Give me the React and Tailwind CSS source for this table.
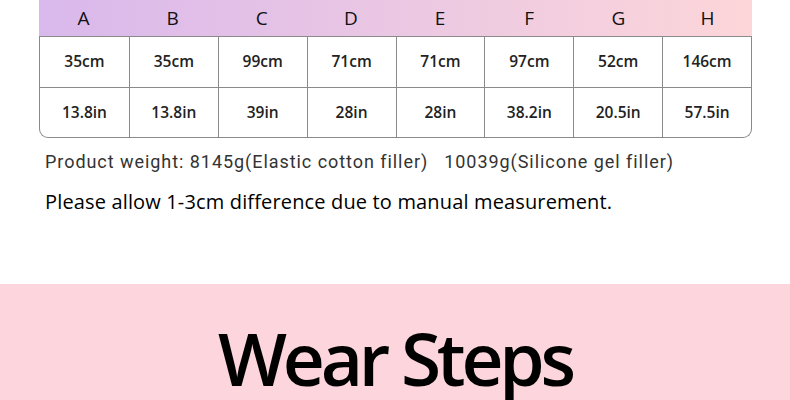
import React from 'react';

const cols = ['A', 'B', 'C', 'D', 'E', 'F', 'G', 'H'];
const cm = ['35cm', '35cm', '99cm', '71cm', '71cm', '97cm', '52cm', '146cm'];
const inch = ['13.8in', '13.8in', '39in', '28in', '28in', '38.2in', '20.5in', '57.5in'];

export default function App() {
  return (
    <div className="w-[790px] h-[400px] overflow-hidden bg-white" style={{ fontFamily: '"Open Sans", "Noto Sans", sans-serif' }}>
      <div className="ml-[39px] w-[713px]">
        <div className="grid grid-cols-8 h-[36px] bg-gradient-to-r from-[#d9b8ec] to-[#fdd6d9]">
          {cols.map((c) => (
            <div key={c} className="flex items-center justify-center text-[19px] text-[#111]">
              {c}
            </div>
          ))}
        </div>
        <div className="border border-t-0 border-[#8a8a8a] rounded-b-[9px] overflow-hidden">
          <div className="grid grid-cols-8 h-[51px] border-t border-[#8a8a8a]">
            {cm.map((v, i) => (
              <div key={i} className={`flex items-center justify-center text-[15.5px] font-semibold text-[#222] ${i > 0 ? 'border-l border-[#8a8a8a]' : ''}`}>
                {v}
              </div>
            ))}
          </div>
          <div className="grid grid-cols-8 h-[50px] border-t border-[#8a8a8a]">
            {inch.map((v, i) => (
              <div key={i} className={`flex items-center justify-center text-[15.5px] font-semibold text-[#222] ${i > 0 ? 'border-l border-[#8a8a8a]' : ''}`}>
                {v}
              </div>
            ))}
          </div>
        </div>
      </div>
      <div className="ml-[45px] mt-[12px] text-[18px] leading-[24px] text-[#333] tracking-[0.95px]" style={{ fontFamily: 'Roboto, sans-serif' }}>
        Product weight: 8145g(Elastic cotton filler)<span className="ml-[16px]">10039g(Silicone gel filler)</span>
      </div>
      <div className="ml-[45px] mt-[14px] text-[20px] leading-[28px] text-black tracking-[0.15px]">
        Please allow 1-3cm difference due to manual measurement.
      </div>
      <div className="mt-[68px] h-[120px] bg-[#fcd6dc] flex justify-center pt-[24px]">
        <div className="text-[73px] leading-[100px] font-semibold text-black tracking-[-4.2px]">
          Wear Steps
        </div>
      </div>
    </div>
  );
}
